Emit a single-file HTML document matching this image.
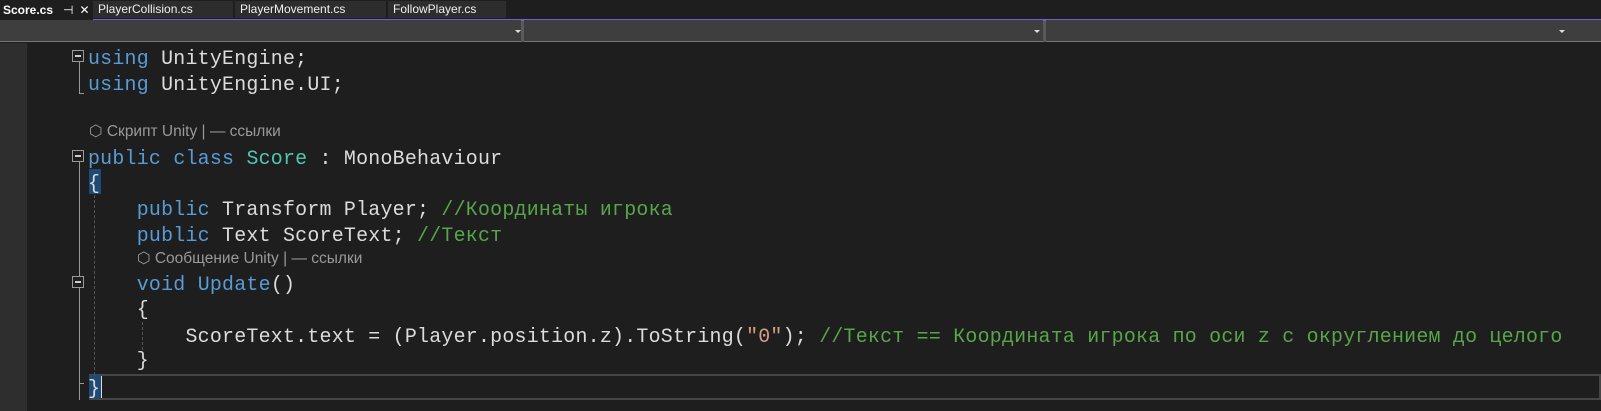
<!DOCTYPE html>
<html><head><meta charset="utf-8"><style>
*{margin:0;padding:0;box-sizing:border-box}
body{width:1601px;height:411px;background:#1e1e1e;overflow:hidden;position:relative;font-family:"Liberation Sans","DejaVu Sans",sans-serif}
.tab{position:absolute;top:1px;height:17px;background:#2d2d2d;color:#f0f0f0;font-size:12px;line-height:17px;padding-left:5px}
.bar{position:absolute;top:20px;height:22px;background:#3e3e3e;border-bottom:1px solid #777}
.arr{position:absolute;top:10px;width:0;height:0;border-left:3px solid transparent;border-right:3px solid transparent;border-top:3px solid #ddd}
.l{position:absolute;left:88px;font-family:"Liberation Mono","DejaVu Sans Mono",monospace;font-size:19.9px;letter-spacing:0.25px;color:#dcdcdc;white-space:pre;line-height:24px;height:24px}
.k{color:#569cd6}.c{color:#4ec9b0}.g{color:#57a64a}.s{color:#d69d85}
.cl{position:absolute;color:#999;font-size:15.5px;white-space:pre;line-height:18px}
.box{position:absolute;left:72px;width:12px;height:12px;border:1px solid #999;background:#1e1e1e}
.box:after{content:"";position:absolute;left:2px;top:4px;width:6px;height:2px;background:#ccc}
.vl{position:absolute;left:79px;width:1px;background:#999}
.dg{position:absolute;width:0;border-left:1px dashed #555}
</style></head><body>
<div style="position:absolute;left:0;top:0;width:1601px;height:19px;background:#1e1e1e"></div>
<div style="position:absolute;left:0;top:0;width:92px;height:20px;background:#1e1e1e;color:#fff;font-size:12px;line-height:20px;padding-left:3px;white-space:nowrap"><b>Score.cs</b><span style="margin-left:10px">⊣</span><span style="margin-left:6px">✕</span></div>
<div class="tab" style="left:93px;width:140px">PlayerCollision.cs</div>
<div class="tab" style="left:235px;width:151px">PlayerMovement.cs</div>
<div class="tab" style="left:388px;width:118px">FollowPlayer.cs</div>
<div style="position:absolute;left:93px;top:19px;width:1508px;height:2px;background:#6d5fd8"></div>
<div class="bar" style="left:0;width:521px"><div class="arr" style="left:515px"></div></div>
<div style="position:absolute;left:521px;top:21px;width:3px;height:21px;background:#5a5a5a"></div>
<div class="bar" style="left:524px;width:519px"><div class="arr" style="left:510px"></div></div>
<div style="position:absolute;left:1043px;top:21px;width:3px;height:21px;background:#5a5a5a"></div>
<div class="bar" style="left:1046px;width:555px"><div class="arr" style="left:513px"></div></div>
<div style="position:absolute;left:0;top:43px;width:27px;height:368px;background:#2e2e2e"></div>
<div style="position:absolute;left:89px;top:374px;width:1512px;height:26px;border:2px solid #464646"></div>
<div class="box" style="top:50px"></div><div class="vl" style="top:62px;height:32px"></div><div style="position:absolute;left:79px;top:93px;width:5px;height:1px;background:#999"></div>
<div class="box" style="top:150px"></div><div class="vl" style="top:162px;height:238px"></div>
<div class="box" style="top:276px"></div>
<div style="position:absolute;left:79px;top:383px;width:5px;height:1px;background:#999"></div>
<div class="dg" style="left:94px;top:195px;height:180px"></div>
<div class="dg" style="left:142px;top:322px;height:28px"></div>
<div style="position:absolute;left:89px;top:169px;width:12px;height:25px;background:#1f4a75"></div>
<div style="position:absolute;left:89px;top:375px;width:12px;height:24px;background:#1f4a75"></div>
<div class="l" style="top:47px"><span class="k">using</span> UnityEngine;</div>
<div class="l" style="top:73px"><span class="k">using</span> UnityEngine.UI;</div>
<div class="cl" style="left:89px;top:123px">⬡ Скрипт Unity | — ссылки</div>
<div class="l" style="top:147px"><span class="k">public</span> <span class="k">class</span> <span class="c">Score</span> : MonoBehaviour</div>
<div class="l" style="top:172px">{</div>
<div class="l" style="top:198px">    <span class="k">public</span> Transform Player; <span class="g">//Координаты игрока</span></div>
<div class="l" style="top:224px">    <span class="k">public</span> Text ScoreText; <span class="g">//Текст</span></div>
<div class="cl" style="left:137px;top:250px">⬡ Сообщение Unity | — ссылки</div>
<div class="l" style="top:273px">    <span class="k">void</span> <span class="k">Update</span>()</div>
<div class="l" style="top:298px">    {</div>
<div class="l" style="top:325px">        ScoreText.text = (Player.position.z).ToString(<span class="s">"0"</span>); <span class="g">//Текст == Координата игрока по оси z с округлением до целого</span></div>
<div class="l" style="top:349px">    }</div>
<div class="l" style="top:377px">}</div>
<div style="position:absolute;left:101px;top:376px;width:1px;height:22px;background:#ddd"></div>
</body></html>
